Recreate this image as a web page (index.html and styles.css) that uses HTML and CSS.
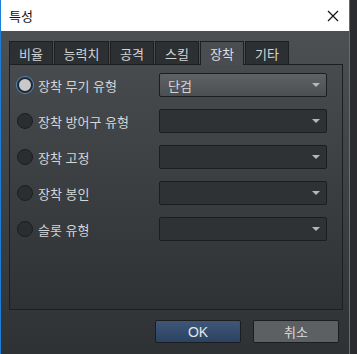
FILE: index.html
```html
<!DOCTYPE html>
<html lang="ko">
<head>
    <meta charset="UTF-8">
    <meta name="viewport" content="width=device-width, initial-scale=1.0">
    <title>특성</title>
    <link rel="stylesheet" href="styles.css">
</head>
<body>
    <div class="window">
        <div class="title-bar">
            <span class="title">특성</span>
            <span class="close">
                <svg width="12" height="12" viewBox="0 0 12 12">
                    <path d="M1 1 L11 11 M11 1 L1 11" stroke="#111" stroke-width="1.2" fill="none"/>
                </svg>
            </span>
        </div>
        <div class="content">
            <div class="tabs">
                <div class="tab">비율</div>
                <div class="tab wide">능력치</div>
                <div class="tab">공격</div>
                <div class="tab">스킬</div>
                <div class="tab active">장착</div>
                <div class="tab">기타</div>
            </div>
            <div class="panel">
                <div class="row">
                    <label class="radio-label"><span class="radio checked"></span>장착 무기 유형</label>
                    <div class="select filled"><span>단검</span><span class="arrow"></span></div>
                </div>
                <div class="row">
                    <label class="radio-label"><span class="radio"></span>장착 방어구 유형</label>
                    <div class="select"><span></span><span class="arrow"></span></div>
                </div>
                <div class="row">
                    <label class="radio-label"><span class="radio"></span>장착 고정</label>
                    <div class="select"><span></span><span class="arrow"></span></div>
                </div>
                <div class="row">
                    <label class="radio-label"><span class="radio"></span>장착 봉인</label>
                    <div class="select"><span></span><span class="arrow"></span></div>
                </div>
                <div class="row">
                    <label class="radio-label"><span class="radio"></span>슬롯 유형</label>
                    <div class="select"><span></span><span class="arrow"></span></div>
                </div>
            </div>
            <div class="buttons">
                <button class="btn ok">OK</button>
                <button class="btn cancel">취소</button>
            </div>
        </div>
    </div>
</body>
</html>
```

FILE: styles.css
```css
body {
    margin: 0;
    background-color: #2a2c2f;
    font-family: "Noto Sans CJK KR", "Liberation Sans", sans-serif;
    font-size: 13px;
    height: 354px;
    overflow: hidden;
}
.window {
    width: 350px;
    height: 354px;
    box-sizing: border-box;
    border-left: 1px solid #1a7fd6;
    border-right: 1px solid #1a7fd6;
    display: flex;
    flex-direction: column;
}
.title-bar {
    height: 31px;
    background-color: #fff;
    display: flex;
    align-items: center;
    justify-content: space-between;
    padding: 0 8px 0 8px;
    flex-shrink: 0;
}
.title {
    color: #111;
    font-size: 13px;
}
.close {
    display: flex;
    margin-right: 2px;
}
.content {
    flex: 1;
    background: linear-gradient(#4d5053, #2f3235);
    padding: 10px 0 0 8px;
}
.tabs {
    display: flex;
    height: 23px;
}
.tab {
    width: 44px;
    box-sizing: border-box;
    margin-right: 1px;
    border: 1px solid #1d1f21;
    border-bottom: none;
    background-color: #2d3033;
    color: #d2d4d6;
    display: flex;
    align-items: center;
    justify-content: center;
    line-height: 1;
}
.tab.wide {
    width: 55px;
}
.tab.active {
    background-color: #4a4d50;
    color: #dcdee0;
    position: relative;
    z-index: 1;
    margin-bottom: -1px;
    height: 24px;
}
.panel {
    width: 334px;
    height: 246px;
    box-sizing: border-box;
    border: 1px solid #1c1e20;
    background: linear-gradient(#484b4e, #2f3235);
    padding: 8px 15px 0 7px;
    display: flex;
    flex-direction: column;
    gap: 12px;
}
.row {
    display: flex;
    align-items: center;
    justify-content: space-between;
    height: 24px;
}
.radio-label {
    display: flex;
    align-items: center;
    color: #d4d6d8;
    line-height: 1;
}
.radio {
    width: 16px;
    height: 16px;
    box-sizing: border-box;
    border-radius: 50%;
    background-color: #2b2e31;
    border: 1px solid #1b1d1f;
    margin-right: 5px;
}
.radio.checked {
    background-color: #c8c9ca;
    border: 2px solid #25282b;
    box-shadow: 0 0 0 1px #4a88c2;
}
.select {
    width: 168px;
    height: 24px;
    box-sizing: border-box;
    border: 1px solid #1b1d1f;
    border-radius: 2px;
    background-color: #2f3235;
    display: flex;
    align-items: center;
    justify-content: space-between;
    padding: 0 6px 0 8px;
    color: #d4d6d8;
    line-height: 1;
}
.select.filled {
    background: linear-gradient(#5f6265, #4c4f52);
}
.arrow {
    width: 0;
    height: 0;
    border-left: 4px solid transparent;
    border-right: 4px solid transparent;
    border-top: 4px solid #b5b7b9;
}
.buttons {
    display: flex;
    justify-content: flex-end;
    gap: 12px;
    padding: 10px 10px 0 0;
}
.btn {
    width: 86px;
    height: 23px;
    border: 1px solid #1b1d1f;
    border-radius: 2px;
    font-family: "Noto Sans CJK KR", "Liberation Sans", sans-serif;
    font-size: 13px;
    line-height: 1;
    padding: 0;
}
.btn.ok {
    background: linear-gradient(#3e5677, #2c4263);
    color: #e3e6ea;
    font-family: "Liberation Sans", sans-serif;
    font-size: 14px;
}
.btn.cancel {
    background-color: #5d6063;
    color: #d8dadc;
}
```
